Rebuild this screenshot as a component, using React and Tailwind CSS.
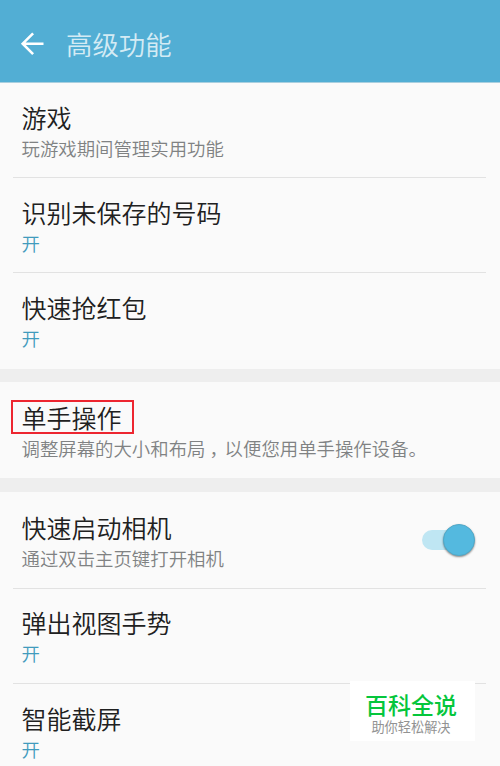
const groups = [
    [
        { title: '游戏', summary: '玩游戏期间管理实用功能', spacing: 'h-[95px] pt-[19px]' },
        { title: '识别未保存的号码', status: '开', spacing: 'h-[95px] pt-[19px]' },
        { title: '快速抢红包', status: '开', spacing: 'h-24 pt-[19px]' },
    ],
    [
        {
            title: '单手操作',
            summary: '调整屏幕的大小和布局，以便您用单手操作设备。',
            highlighted: true,
            spacing: 'h-24 pt-5',
        },
    ],
    [
        { title: '快速启动相机', summary: '通过双击主页键打开相机', toggle: true, spacing: 'h-[97px] pt-5' },
        { title: '弹出视图手势', status: '开', spacing: 'h-[95px] pt-[18.4px]' },
        { title: '智能截屏', status: '开', spacing: 'h-[95px] pt-[19px]' },
    ],
];

const BackArrow = () => (
    <svg width="24" height="24" viewBox="0 0 24 24" fill="none" stroke="#fff" strokeWidth="2.6">
        <path d="M23.5 11.7H2.8M13.1 1.3L2.7 11.7l10.4 10.4" />
    </svg>
);

const Toggle = () => (
    <div className="relative mt-3 mr-[11px] h-8 w-[53px] shrink-0">
        <div className="absolute top-[6px] left-0 h-5 w-11 rounded-full bg-[#bfe6f3]" />
        <div className="absolute top-0 right-0 size-8 rounded-full border border-[#50a9c9] bg-[#54b9df] shadow-[0_1px_2px_rgba(0,0,0,0.45)]" />
    </div>
);

// the comma is set apart so it sits in the middle of its cell
const Summary = ({ text }) => {
    const [head, tail] = text.split('，');
    return (
        <div className="flex">
            <span>{head}</span>
            {tail && <span className="w-[19.2px] pl-1 [font-feature-settings:'halt']">，</span>}
            {tail && <span>{tail}</span>}
        </div>
    );
};

const SettingRow = ({ item, last }) => (
    <div className={`flex justify-between ml-[13px] mr-[14px] pl-[8.5px] ${item.spacing} ${last ? '' : 'border-b border-[#e2e2e2]'}`}>
        <div className="whitespace-nowrap">
            <div className="relative w-fit text-[25px] leading-[30px] font-[350] text-[#202020]">
                {item.title}
                {item.highlighted && (
                    <div className="absolute -top-[2px] -left-[11px] h-[34px] w-[123px] border-2 border-[#ed2630]" />
                )}
            </div>
            <div className={`mt-1 text-[18.4px] leading-6 font-[350] ${item.status ? 'text-[#419bbd]' : 'text-[#808283]'}`}>
                {item.status || <Summary text={item.summary} />}
            </div>
        </div>
        {item.toggle && <Toggle />}
    </div>
);

const App = () => {
    return (
        <div className="relative h-[766px] w-[500px] overflow-hidden bg-[#eeeeee] font-['Noto_Sans_CJK_SC',sans-serif]">
            <header className="flex h-[83px] items-center border-b border-[#a9cfdf] bg-[#52aed4] pt-[5px] pl-5">
                <BackArrow />
                <h1 className="ml-[22px] text-[26.4px] leading-8 font-[350] text-[#d4ebf4]">高级功能</h1>
            </header>

            <main className="flex flex-col gap-[13.4px]">
                {groups.map((items, idx) => (
                    <section key={idx} className="bg-[#fafafa]">
                        {items.map((item, i) => (
                            <SettingRow key={item.title} item={item} last={i === items.length - 1} />
                        ))}
                    </section>
                ))}
            </main>

            <div className="absolute top-[681px] left-[350px] flex h-[60px] w-[125px] flex-col items-center bg-white pt-[9px] pr-[3px] whitespace-nowrap">
                <div className="text-[23px] leading-7 font-medium text-[#05c63c]">百科全说</div>
                <div className="mt-px text-[13.2px] leading-4 text-[#929292]">助你轻松解决</div>
            </div>
        </div>
    );
};

export default App;
